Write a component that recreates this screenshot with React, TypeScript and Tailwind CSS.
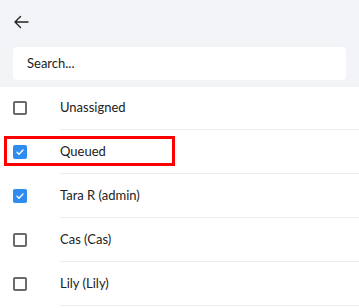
import { useState } from "react";

const people = [
  { name: "Unassigned", checked: false },
  { name: "Queued", checked: true, highlight: true },
  { name: "Tara R (admin)", checked: true },
  { name: "Cas (Cas)", checked: false },
  { name: "Lily (Lily)", checked: false },
];

function Box({ checked }: { checked: boolean }) {
  if (checked) {
    return (
      <span className="flex h-[14px] w-[14px] items-center justify-center rounded-[2px] bg-[#2f8cf0]">
        <svg width="10" height="10" viewBox="0 0 10 10" fill="none">
          <path d="M2 5.2l2 2 4-4.2" stroke="white" strokeWidth="1.3" strokeLinecap="round" strokeLinejoin="round" />
        </svg>
      </span>
    );
  }
  return <span className="h-[14px] w-[14px] rounded-[2px] border-2 border-[#6b6b6b]" />;
}

export default function App() {
  const [rows] = useState(people);

  return (
    <div className="h-[308px] w-[359px] overflow-hidden bg-white font-['Lato',sans-serif] text-[#222]">
      <div className="h-[87px] bg-[#f3f4f8] px-[13px] pt-[14px]">
        <button className="flex h-[16px] w-[20px] items-center">
          <svg width="16" height="14" viewBox="0 0 16 14" fill="none">
            <path d="M15 7H2M7.5 1.5L2 7l5.5 5.5" stroke="#222" strokeWidth="1.4" strokeLinecap="round" strokeLinejoin="round" />
          </svg>
        </button>
        <div className="mt-[17px] flex h-[33px] w-[333px] items-center rounded-[4px] bg-white px-[14px] text-[13px] text-[#222]">
          Search...
        </div>
      </div>

      <ul className="-mt-[1px]">
        {rows.map((r) => (
          <li key={r.name} className="relative flex h-[44px] items-stretch">
            <div className="flex w-[60px] items-center pl-[13px]">
              <Box checked={r.checked} />
            </div>
            <div className="flex flex-1 items-center border-b border-[#ececec] text-[13px]">
              {r.name}
            </div>
            {r.highlight && (
              <div className="pointer-events-none absolute left-[4px] top-[6px] h-[30px] w-[171px] border-[3px] border-[#ff0000]" />
            )}
          </li>
        ))}
      </ul>
    </div>
  );
}
